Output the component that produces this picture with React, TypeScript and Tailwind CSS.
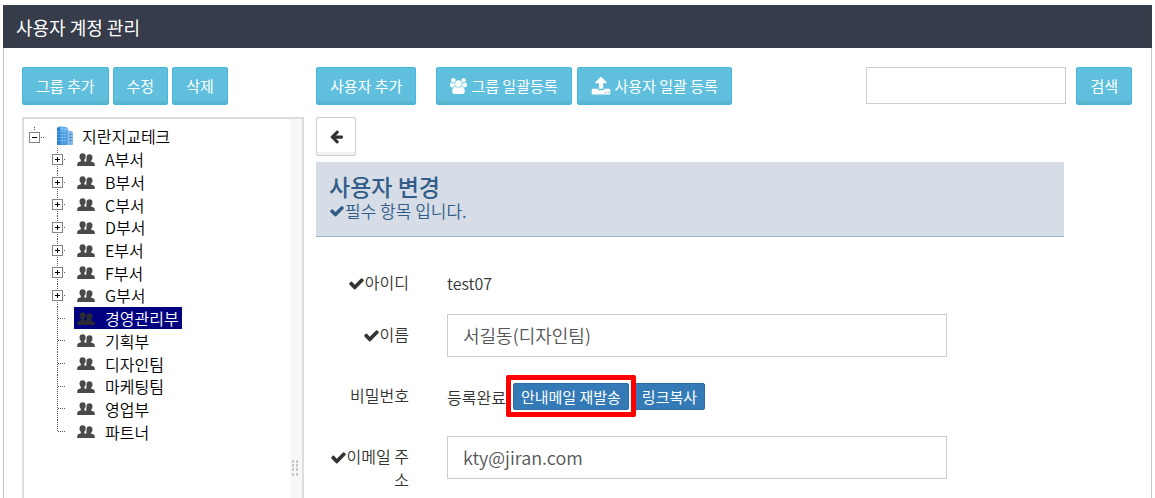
import { ReactNode } from "react";

interface IconProps {
  className?: string;
}

const departments = [
  { name: "A부서", expandable: true },
  { name: "B부서", expandable: true },
  { name: "C부서", expandable: true },
  { name: "D부서", expandable: true },
  { name: "E부서", expandable: true },
  { name: "F부서", expandable: true },
  { name: "G부서", expandable: true },
  { name: "경영관리부", selected: true },
  { name: "기획부" },
  { name: "디자인팀" },
  { name: "마케팅팀" },
  { name: "영업부" },
  { name: "파트너" },
];

const CheckIcon = ({ className }: IconProps) => (
  <svg className={className} viewBox="0 0 1792 1792" fill="currentColor">
    <path d="M1671 566q0 40-28 68l-724 724-136 136q-28 28-68 28t-68-28l-136-136-362-362q-28-28-28-68t28-68l136-136q28-28 68-28t68 28l294 295 656-657q28-28 68-28t68 28l136 136q28 28 28 68z" />
  </svg>
);

const ArrowLeftIcon = ({ className }: IconProps) => (
  <svg className={className} viewBox="0 0 1792 1792" fill="currentColor">
    <path d="M1664 896v128q0 53-32.5 90.5t-84.5 37.5h-704l293 294q38 36 38 90t-38 90l-75 76q-37 37-90 37-52 0-91-37l-651-652q-37-37-37-90 0-52 37-91l651-650q38-38 91-38 52 0 90 38l75 74q38 38 38 91t-38 91l-293 293h704q52 0 84.5 37.5t32.5 90.5z" />
  </svg>
);

const UploadIcon = ({ className }: IconProps) => (
  <svg className={className} viewBox="0 0 1792 1792" fill="currentColor">
    <path d="M1344 1472q0-26-19-45t-45-19-45 19-19 45 19 45 45 19 45-19 19-45zm256 0q0-26-19-45t-45-19-45 19-19 45 19 45 45 19 45-19 19-45zm128-224v320q0 40-28 68t-68 28h-1472q-40 0-68-28t-28-68v-320q0-40 28-68t68-28h427q21 56 70.5 92t110.5 36h256q61 0 110.5-36t70.5-92h427q40 0 68 28t28 68zm-325-648q-17 40-59 40h-256v448q0 26-19 45t-45 19h-256q-26 0-45-19t-19-45v-448h-256q-42 0-59-40-17-39 14-69l448-448q18-19 45-19t45 19l448 448q31 30 14 69z" />
  </svg>
);

const GroupIcon = ({ className }: IconProps) => (
  <svg className={className} viewBox="0 0 1920 1792" fill="currentColor">
    <path d="M593 896q-162 5-265 128h-134q-82 0-138-40.5t-56-118.5q0-353 124-353 6 0 43.5 21t97.5 42.5 119 21.5q67 0 133-23-5 37-5 66 0 139 81 256zm1071 637q0 120-73 189.5t-194 69.5h-874q-121 0-194-69.5t-73-189.5q0-53 3.5-103.5t14-109 26.5-108.5 43-97.5 62-81 85.5-53.5 111.5-20q10 0 43 21.5t73 48 107 48 135 21.5 135-21.5 107-48 73-48 43-21.5q61 0 111.5 20t85.5 53.5 62 81 43 97.5 26.5 108.5 14 109 3.5 103.5zm-1024-1277q0 106-75 181t-181 75-181-75-75-181 75-181 181-75 181 75 75 181zm704 384q0 159-112.5 271.5t-271.5 112.5-271.5-112.5-112.5-271.5 112.5-271.5 271.5-112.5 271.5 112.5 112.5 271.5zm576 225q0 78-56 118.5t-138 40.5h-134q-103-123-265-128 81-117 81-256 0-29-5-66 66 23 133 23 59 0 119-21.5t97.5-42.5 43.5-21q124 0 124 353zm-128-609q0 106-75 181t-181 75-181-75-75-181 75-181 181-75 181 75 75 181z" />
  </svg>
);

const BuildingIcon = ({ className }: IconProps) => (
  <svg className={className} viewBox="0 0 18 20">
    <path d="M11 4l5 1 1 2v12h-6z" fill="#8fc3ec" />
    <path d="M1 2l3-1.5 6 .5 1.5 1.5V19H1z" fill="#4696dc" />
    <path d="M1 2l3-1.5V19H1z" fill="#2f80cc" />
    <path d="M4 1l6 .5 1.500 1.500v2L4 4z" fill="#6fb8ee" />
    <path
      d="M1 5.500h10M1 8.500h10M1 11.500h10M1 14.500h10M6.500 2v16M9 2v16"
      stroke="#8ccbf4"
      strokeWidth="0.5"
    />
    <path
      d="M12 8.500h5M12 11.500h5M12 14.500h5M14.500 6v13"
      stroke="#3c86cb"
      strokeWidth="0.6"
    />
  </svg>
);

const PeopleIcon = ({ className }: IconProps) => (
  <svg className={className} viewBox="0 0 18 13" fill="currentColor">
    <path d="M9.500 4.500c0-2 1.200-3.200 3-3.200s3 1.200 3 3.200c0 1.500-.6 2.500-1.300 3.200v1c1.800.5 3.600.8 3.600 2.800V13H9z" />
    <path d="M2.500 3.600C2.500 1.300 3.700.2 5.600.2s3.100 1.100 3.100 3.400c0 1.500-.6 2.700-1.400 3.400v1.300c2 .6 3.500 1 3.500 3V13H.2v-1.700c0-2 1.700-2.400 3.700-3V7C3.100 6.300 2.500 5.100 2.500 3.600z" />
  </svg>
);

// 트리 펼침 표시와 점선
const TreeBranch = ({ expandable, last }: { expandable?: boolean; last?: boolean }) => (
  <svg className="h-[23px] w-[18px] shrink-0" viewBox="0 0 18 23" shapeRendering="crispEdges">
    <path
      d={last ? "M7.500 0v12M8 11.500h8" : "M7.500 0v23M8 11.500h8"}
      stroke="#555"
      strokeDasharray="1 1"
      fill="none"
    />
    {expandable && (
      <>
        <rect x="2.500" y="6.500" width="10" height="10" fill="#fff" stroke="#848484" />
        <path d="M5 11.500h5M7.500 9v5" stroke="#000" />
      </>
    )}
  </svg>
);

const InfoButton = ({ children }: { children: ReactNode }) => (
  <button
    type="button"
    className="flex h-[38px] shrink-0 items-center gap-1 rounded-[2px] border border-[#46b8da] bg-[#5fbfdc] px-[13px] text-[15px] font-normal whitespace-nowrap text-white shadow-[inset_0_-3px_0_rgba(0,0,0,0.05)]"
  >
    {children}
  </button>
);

const SmallButton = ({ children }: { children: ReactNode }) => (
  <button
    type="button"
    className="h-[27px] rounded-[2px] border border-[#2e6da4] bg-[#337ab7] px-[7px] text-[15px] leading-5 font-normal whitespace-nowrap text-white"
  >
    {children}
  </button>
);

const GroupTree = () => (
  <div className="flex w-[282px] shrink-0 border-2 border-b-0 border-[#dddddd] text-base leading-[22px] text-black">
    <div className="flex-1 pt-[5px] pl-1">
      <div className="flex h-6 items-center">
        <svg className="h-6 w-[18px]" viewBox="0 0 18 24" shapeRendering="crispEdges">
          <path d="M6.500 3v4M13 13.500h3" stroke="#555" strokeDasharray="1 1" />
          <rect x="1.500" y="8.500" width="10" height="10" fill="#fff" stroke="#848484" />
          <path d="M4 13.500h5" stroke="#000" />
        </svg>
        <BuildingIcon className="mr-2 ml-[10px] h-5 w-[18px]" />
        <span>지란지교테크</span>
      </div>
      <ul className="grid h-[295px] auto-rows-fr pl-[22px]">
        {departments.map((dept, i) => (
          <li key={dept.name} className="flex items-center">
            <TreeBranch expandable={dept.expandable} last={i === departments.length - 1} />
            <span
              className={
                dept.selected
                  ? "ml-[6px] flex items-center bg-[#000080] px-[3px] text-white"
                  : "ml-[6px] flex items-center px-[3px]"
              }
            >
              <PeopleIcon
                className={
                  dept.selected
                    ? "mr-[10px] h-[13px] w-[18px] text-[#2b2b33]"
                    : "mr-[10px] h-[13px] w-[18px] text-[#4a4a4a]"
                }
              />
              {dept.name}
            </span>
          </li>
        ))}
      </ul>
    </div>
    <div className="w-3 bg-[#f7f7f7] pt-[341px] pl-[2px]">
      <svg className="h-4 w-[6px]" viewBox="0 0 6 16" fill="#c8c8c8" shapeRendering="crispEdges">
        <path d="M0 0h2v3H0zM4 0h2v3H4zM0 4h2v3H0zM4 4h2v3H4zM0 8h2v3H0zM4 8h2v3H4zM0 13h2v3H0zM4 13h2v3H4z" />
      </svg>
    </div>
  </div>
);

const labelStyle = "mr-[38px] w-[93px] shrink-0 pl-[5px] pb-[2px] text-right leading-[23px]";
const inputStyle =
  "h-[43px] w-[500px] max-w-full border border-[#cccccc] px-[15px] pb-[2px] text-lg font-[350] text-[#555555] outline-none";

const UserForm = () => (
  <form className="flex flex-col gap-[18px] pt-[33px] text-base text-[#333333]">
    <div className="flex h-[26px] items-center">
      <div className={labelStyle}>
        <CheckIcon className="inline size-[17px] align-[-3px]" />
        아이디
      </div>
      <div>test07</div>
    </div>
    <div className="flex items-center">
      <label htmlFor="name" className={labelStyle}>
        <CheckIcon className="inline size-[17px] align-[-3px]" />
        이름
      </label>
      <input id="name" type="text" defaultValue="서길동(디자인팀)" className={inputStyle} />
    </div>
    <div className="flex h-[43px] items-center">
      <div className={labelStyle}>비밀번호</div>
      <div className="flex items-center">
        <span>등록완료</span>
        <div className="relative mr-[5px] ml-[7px] flex">
          <SmallButton>안내메일 재발송</SmallButton>
          <div className="pointer-events-none absolute -inset-x-[7px] -top-[8px] -bottom-[7px] rounded-[2px] border-[5px] border-[#ff0000]" />
        </div>
        <SmallButton>링크복사</SmallButton>
      </div>
    </div>
    <div className="flex h-[62px] items-start">
      <label htmlFor="email" className={`${labelStyle} pt-[9px]`}>
        <CheckIcon className="inline size-[17px] align-[-3px]" />
        이메일 주소
      </label>
      <input id="email" type="text" defaultValue="kty@jiran.com" className={inputStyle} />
    </div>
  </form>
);

const App = () => {
  return (
    <div className="flex min-h-screen flex-col bg-white px-[3px] pt-[5px] font-['Noto_Sans_CJK_KR',sans-serif] font-[350]">
      <h1 className="flex h-[43px] shrink-0 items-center bg-[#363c4a] px-[13px] text-lg font-normal text-white">
        사용자 계정 관리
      </h1>
      <div className="flex flex-1 flex-col border-x border-[#c8c8c8] pt-[19px] pr-[19px] pl-[18px]">
        <div className="flex gap-3">
          <div className="flex w-[282px] shrink-0 gap-1">
            <InfoButton>그룹 추가</InfoButton>
            <InfoButton>수정</InfoButton>
            <InfoButton>삭제</InfoButton>
          </div>
          <div className="flex flex-1">
            <InfoButton>사용자 추가</InfoButton>
            <div className="ml-5 flex gap-[5px]">
              <InfoButton>
                <GroupIcon className="h-4 w-[17px]" />
                그룹 일괄등록
              </InfoButton>
              <InfoButton>
                <UploadIcon className="size-5" />
                사용자 일괄 등록
              </InfoButton>
            </div>
            <div className="ml-auto flex gap-[10px]">
              <input
                type="text"
                aria-label="검색어"
                className="h-[37px] w-[200px] border border-[#cccccc] px-3 outline-none"
              />
              <InfoButton>검색</InfoButton>
            </div>
          </div>
        </div>
        <div className="mt-3 flex flex-1 gap-3">
          <GroupTree />
          <div className="min-w-0 flex-1">
            <button
              type="button"
              aria-label="뒤로"
              className="flex h-[39px] w-10 items-center justify-center rounded-[2px] border border-[#cccccc] bg-white text-[#333333] shadow-[inset_0_-3px_0_rgba(0,0,0,0.05)]"
            >
              <ArrowLeftIcon className="size-[15px]" />
            </button>
            <div className="w-11/12">
              <div className="mt-[6px] h-[75px] border-b border-[#9fb3c6] bg-[#d6dde7] px-[13px] pt-[10px] text-[#325d88]">
                <h2 className="text-[23px] leading-7 font-medium">사용자 변경</h2>
                <p className="flex items-center text-[17px] leading-[22px]">
                  <CheckIcon className="size-4" />
                  필수 항목 입니다.
                </p>
              </div>
              <UserForm />
            </div>
          </div>
        </div>
      </div>
    </div>
  );
};

export default App;
